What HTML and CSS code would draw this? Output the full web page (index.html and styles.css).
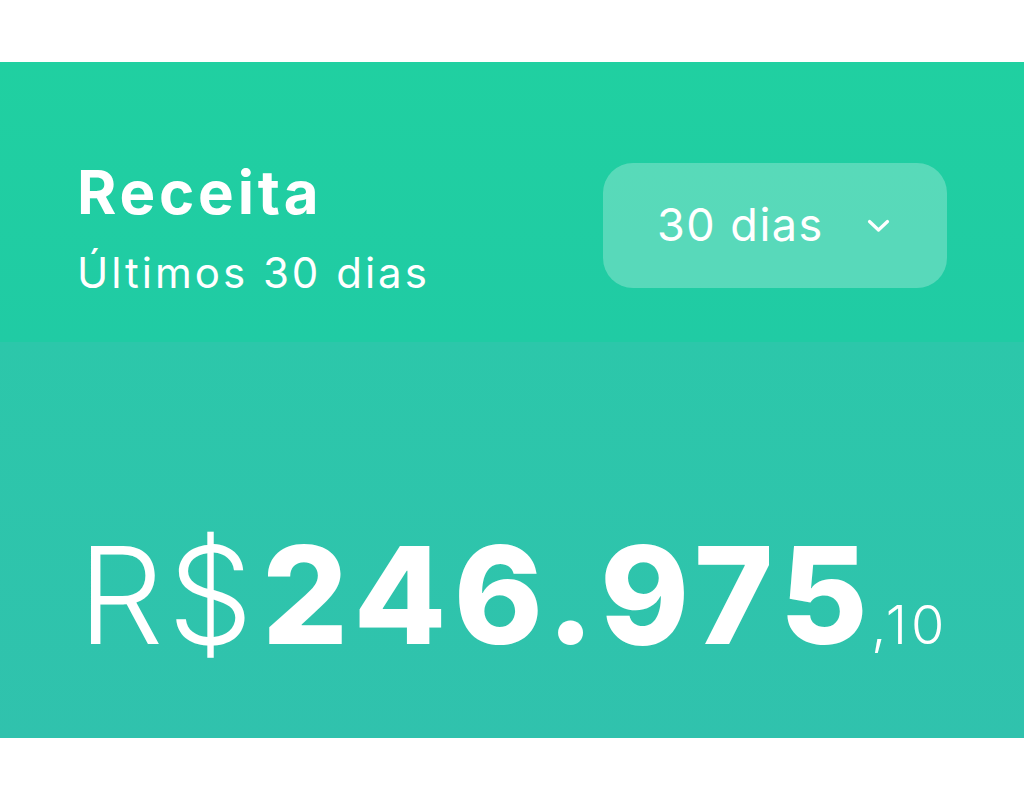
FILE: index.html
```html
<!DOCTYPE html>
<html lang="pt-BR">
<head>
    <meta charset="UTF-8">
    <meta name="viewport" content="width=device-width, initial-scale=1.0">
    <title>Receita</title>
    <link rel="stylesheet" href="styles.css">
</head>
<body>

    <div class="revenue-card">
        <!-- Title and period picker -->
        <div class="card-header">
            <div class="card-title">
                <h2>Receita</h2>
                <p>Últimos 30 dias</p>
            </div>
            <button class="period-select">
                <span>30 dias</span>
                <svg class="chevron" width="23" height="14" viewBox="0 0 23 14">
                    <polyline points="2.5,2.5 11.5,11 20.5,2.5" fill="none" stroke="#fff" stroke-width="3.2" stroke-linecap="round" stroke-linejoin="round"/>
                </svg>
            </button>
        </div>

        <!-- Total amount -->
        <div class="card-body">
            <div class="amount">
                <span class="currency">R$</span><span class="value">246.975</span><span class="cents">,10</span>
            </div>
        </div>
    </div>

</body>
</html>
```

FILE: styles.css
```css
body {
    margin: 0;
    background-color: #ffffff;
    font-family: Inter, "Noto Sans", sans-serif;
    color: #ffffff;
}
.revenue-card {
    margin-top: 62px;
}
.card-header {
    height: 280px;
    box-sizing: border-box;
    padding: 94px 77px 0 77px;
    display: flex;
    justify-content: space-between;
    align-items: flex-start;
    background: linear-gradient(180deg, #20d0a1 0%, #20cba4 100%);
}
.card-title h2 {
    margin: 0;
    font-size: 60px;
    line-height: 72px;
    font-weight: 700;
    letter-spacing: 3.8px;
}
.card-title p {
    margin: 20px 0 0;
    font-size: 42px;
    line-height: 50px;
    font-weight: 400;
    letter-spacing: 3px;
}
.period-select {
    margin-top: 7px;
    width: 344px;
    height: 125px;
    box-sizing: border-box;
    padding: 0 57px 0 54px;
    display: flex;
    align-items: center;
    justify-content: space-between;
    background-color: rgba(255, 255, 255, 0.25);
    border: none;
    border-radius: 30px;
    color: #ffffff;
    font-family: inherit;
    font-size: 45px;
    cursor: pointer;
}
.period-select span {
    line-height: 1;
    padding-bottom: 2px;
    letter-spacing: 1.5px;
}
.chevron {
    display: block;
}
.card-body {
    height: 396px;
    box-sizing: border-box;
    padding: 186px 0 0 78px;
    background: linear-gradient(180deg, #2cc7aa 0%, #30c2ad 100%);
}
.amount {
    font-size: 135px;
    line-height: 1;
    white-space: nowrap;
}
.currency {
    font-weight: 300;
    letter-spacing: 4px;
    margin-right: 5px;
}
.value {
    font-weight: 800;
    letter-spacing: 7.5px;
}
.cents {
    margin-left: -4px;
    font-size: 54px;
    font-weight: 300;
    letter-spacing: 4px;
}
```
